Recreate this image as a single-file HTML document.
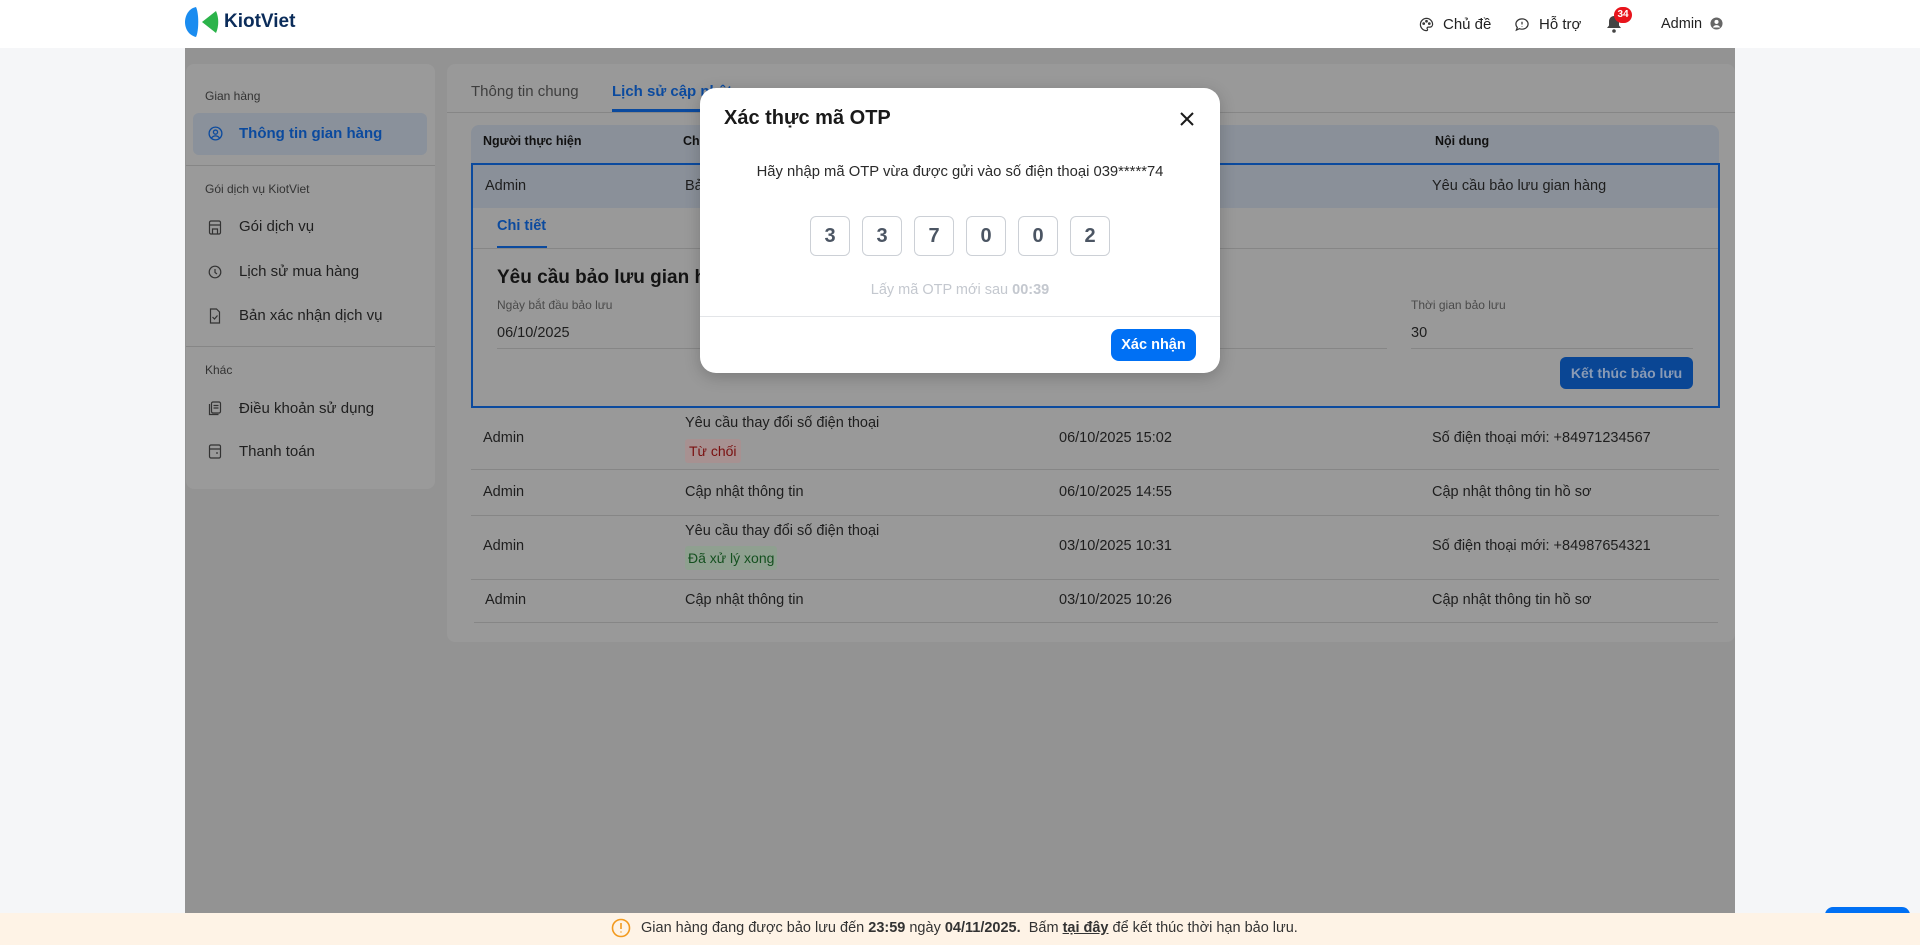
<!DOCTYPE html>
<html><head><meta charset="utf-8"><style>
*{box-sizing:border-box;margin:0;padding:0}
body{width:1920px;height:945px;overflow:hidden;background:#f5f6f8;font-family:"Liberation Sans",sans-serif;color:#222;position:relative;font-size:14px}
.a{position:absolute;white-space:nowrap}
.hdr{left:0;top:0;width:1920px;height:48px;background:#fff}
.cont{left:185px;top:48px;width:1550px;height:865px;background:#939393}
.card{background:#9a9a9a;border-radius:8px}
.lbl{font-size:12px;color:#333}
.it{font-size:15px;color:#1f1f1f}
.th{font-size:12.5px;font-weight:bold;color:#111}
.td{font-size:14.5px;color:#1e1e1e}
.hl{background:#8a9099}
.line{height:1px;background:#868686}
</style></head><body>
<div class="a hdr"></div>
<svg class="a" style="left:184px;top:6px" width="36" height="32" viewBox="0 0 36 32"><path d="M12 1 C3 3 1 12 1 16 C1 22 4 29 12 31 C15 25 15 7 12 1Z" fill="#1a8cf0"/><path d="M32 5 L18 16 L32 27 C35 20 35 12 32 5Z" fill="#2bb34a"/></svg>
<div class="a" style="left:224px;top:11px;font-size:19px;font-weight:bold;color:#0b2c5a">KiotViet</div>
<svg class="a" style="left:1419px;top:17px" width="15" height="15" viewBox="0 0 16 16" fill="none" stroke="#333" stroke-width="1.3"><path d="M8 1.5a6.5 6.5 0 1 0 0 13c1.2 0 1.4-1 .8-1.8-.6-.8 0-1.9 1-1.9h1.7A3 3 0 0 0 14.5 8 6.5 6.5 0 0 0 8 1.5z"/><circle cx="5" cy="7" r=".8"/><circle cx="8" cy="4.5" r=".8"/><circle cx="11" cy="7" r=".8"/></svg>
<div class="a" style="left:1443px;top:16px;font-size:15px;color:#222">Chủ đề</div>
<svg class="a" style="left:1514px;top:17px" width="16" height="15" viewBox="0 0 16 16" fill="none" stroke="#333" stroke-width="1.3"><path d="M8 2c3.6 0 6.5 2.4 6.5 5.5S11.6 13 8 13c-1 0-2-.2-2.8-.5L2 14l1-2.8C2 10.2 1.5 8.9 1.5 7.5 1.5 4.4 4.4 2 8 2z"/><path d="M8 5v3M8 10v.5"/></svg>
<div class="a" style="left:1539px;top:16px;font-size:15px;color:#222">Hỗ trợ</div>
<svg class="a" style="left:1605px;top:14px" width="18" height="20" viewBox="0 0 18 20"><path d="M9 2c3 0 5 2.5 5 5.5v4l2 2.5H2l2-2.5v-4C4 4.5 6 2 9 2z" fill="#444"/><circle cx="9" cy="17" r="1.8" fill="#444"/></svg>
<div class="a" style="left:1614px;top:7px;width:18px;height:16px;border-radius:8px;background:#e8141c;color:#fff;font-size:10px;font-weight:bold;text-align:center;line-height:16px">34</div>
<div class="a" style="left:1661px;top:16px;font-size:14.5px;color:#222">Admin</div>
<svg class="a" style="left:1710px;top:17px" width="13" height="13" viewBox="0 0 14 14"><circle cx="7" cy="7" r="6.5" fill="#666"/><circle cx="7" cy="5.3" r="2.2" fill="#fff"/><path d="M3 11.3c1-1.8 2.4-2.5 4-2.5s3 .7 4 2.5" fill="#fff"/></svg>

<div class="a cont"></div>
<div class="a card" style="left:186px;top:64px;width:249px;height:425px"></div>
<div class="a lbl" style="left:205px;top:89px">Gian hàng</div>
<div class="a" style="left:193px;top:113px;width:234px;height:42px;background:#8a919b;border-radius:6px"></div>
<svg class="a" style="left:208px;top:126px" width="15" height="15" viewBox="0 0 16 16" fill="none" stroke="#0b4a9e" stroke-width="1.4"><circle cx="8" cy="8" r="6.8"/><circle cx="8" cy="6.5" r="2.2"/><path d="M3.8 12.8c1-1.6 2.4-2.3 4.2-2.3s3.2.7 4.2 2.3"/></svg>
<div class="a" style="left:239px;top:125px;font-size:15px;font-weight:bold;color:#0b4a9e">Thông tin gian hàng</div>
<div class="a line" style="left:186px;top:165px;width:249px"></div>
<div class="a lbl" style="left:205px;top:182px">Gói dịch vụ KiotViet</div>
<div class="a it" style="left:239px;top:218px">Gói dịch vụ</div>
<div class="a it" style="left:239px;top:263px">Lịch sử mua hàng</div>
<div class="a it" style="left:239px;top:307px">Bản xác nhận dịch vụ</div>
<svg class="a" style="left:208px;top:220px" width="14" height="110" viewBox="0 0 14 110" fill="none" stroke="#333" stroke-width="1.2"><rect x="1.5" y="1" width="11" height="13" rx="1.5"/><path d="M1.5 5h11M4.5 14V9h5v5"/><circle cx="7" cy="52" r="5.8"/><path d="M7 49v3.5l2 1.5"/><path d="M2.5 89h6l3 3v11h-9z"/><path d="M4.5 97l2 2 3-3.5"/></svg>
<div class="a line" style="left:186px;top:346px;width:249px"></div>
<div class="a lbl" style="left:205px;top:363px">Khác</div>
<div class="a it" style="left:239px;top:400px">Điều khoản sử dụng</div>
<div class="a it" style="left:239px;top:443px">Thanh toán</div>
<svg class="a" style="left:208px;top:401px" width="14" height="60" viewBox="0 0 14 60" fill="none" stroke="#333" stroke-width="1.2"><rect x="3.5" y="1" width="9" height="11" rx="1.5"/><path d="M1.5 3v10.5h9M5.5 4.5h5M5.5 7h5"/><rect x="1.5" y="44" width="11" height="13" rx="1.5"/><path d="M1.5 48h11M9 51v2"/></svg>

<div class="a card" style="left:447px;top:64px;width:1288px;height:578px;background:#999"></div>
<div class="a" style="left:471px;top:83px;font-size:15px;color:#3e3e3e">Thông tin chung</div>
<div class="a" style="left:612px;top:83px;font-size:15px;font-weight:bold;color:#0b4a9e">Lịch sử cập nhật</div>
<div class="a line" style="left:447px;top:112px;width:1288px"></div>
<div class="a" style="left:612px;top:109px;width:90px;height:3px;background:#0b4a9e"></div>
<div class="a hl" style="left:471px;top:125px;width:1248px;height:39px;border-radius:8px 8px 0 0"></div>
<div class="a th" style="left:483px;top:134px">Người thực hiện</div>
<div class="a th" style="left:683px;top:134px">Chức năng</div>
<div class="a th" style="left:1435px;top:134px">Nội dung</div>
<div class="a" style="left:471px;top:163px;width:1249px;height:245px;border:2px solid #0b4a9e"></div>
<div class="a hl" style="left:473px;top:165px;width:1245px;height:43px"></div>
<div class="a td" style="left:485px;top:178px">Admin</div>
<div class="a td" style="left:685px;top:178px">Bảo lưu gian hàng</div>
<div class="a td" style="left:1432px;top:178px">Yêu cầu bảo lưu gian hàng</div>
<div class="a" style="left:497px;top:218px;font-size:14.5px;font-weight:bold;color:#0b4a9e">Chi tiết</div>
<div class="a" style="left:497px;top:246px;width:50px;height:3px;background:#0b4a9e"></div>
<div class="a line" style="left:473px;top:248px;width:1245px"></div>
<div class="a" style="left:497px;top:267px;font-size:19px;font-weight:bold;color:#141414">Yêu cầu bảo lưu gian hàng</div>
<div class="a" style="left:497px;top:298px;font-size:12px;color:#4a4a4a">Ngày bắt đầu bảo lưu</div>
<div class="a td" style="left:497px;top:325px">06/10/2025</div>
<div class="a line" style="left:497px;top:348px;width:890px"></div>
<div class="a" style="left:1411px;top:298px;font-size:12px;color:#4a4a4a">Thời gian bảo lưu</div>
<div class="a td" style="left:1411px;top:325px">30</div>
<div class="a line" style="left:1411px;top:348px;width:282px"></div>
<div class="a" style="left:1560px;top:357px;width:133px;height:32px;background:#0a4694;border-radius:6px;color:#8a9bb5;font-size:14px;font-weight:bold;text-align:center;line-height:32px">Kết thúc bảo lưu</div>

<div class="a td" style="left:483px;top:430px">Admin</div>
<div class="a td" style="left:685px;top:415px">Yêu cầu thay đổi số điện thoại</div>
<div class="a" style="left:685px;top:439px;height:24px;padding:0 4px;background:#a79191;border-radius:3px;color:#7a1010;font-size:14px;line-height:24px">Từ chối</div>
<div class="a td" style="left:1059px;top:430px">06/10/2025 15:02</div>
<div class="a td" style="left:1432px;top:430px">Số điện thoại mới: +84971234567</div>
<div class="a line" style="left:471px;top:469px;width:1248px"></div>
<div class="a td" style="left:483px;top:484px">Admin</div>
<div class="a td" style="left:685px;top:484px">Cập nhật thông tin</div>
<div class="a td" style="left:1059px;top:484px">06/10/2025 14:55</div>
<div class="a td" style="left:1432px;top:484px">Cập nhật thông tin hồ sơ</div>
<div class="a line" style="left:471px;top:515px;width:1248px"></div>
<div class="a td" style="left:483px;top:538px">Admin</div>
<div class="a td" style="left:685px;top:523px">Yêu cầu thay đổi số điện thoại</div>
<div class="a" style="left:685px;top:546px;height:24px;padding:0 3px;background:#8fa090;border-radius:3px;color:#14501f;font-size:14px;line-height:24px">Đã xử lý xong</div>
<div class="a td" style="left:1059px;top:538px">03/10/2025 10:31</div>
<div class="a td" style="left:1432px;top:538px">Số điện thoại mới: +84987654321</div>
<div class="a line" style="left:471px;top:579px;width:1248px"></div>
<div class="a td" style="left:485px;top:592px">Admin</div>
<div class="a td" style="left:685px;top:592px">Cập nhật thông tin</div>
<div class="a td" style="left:1059px;top:592px">03/10/2025 10:26</div>
<div class="a td" style="left:1432px;top:592px">Cập nhật thông tin hồ sơ</div>
<div class="a line" style="left:474px;top:622px;width:1244px"></div>

<div class="a" style="left:700px;top:88px;width:520px;height:285px;background:#fff;border-radius:16px;box-shadow:0 4px 16px rgba(0,0,0,.2)"></div>
<div class="a" style="left:724px;top:107px;font-size:20px;font-weight:bold;color:#1a1a1a">Xác thực mã OTP</div>
<svg class="a" style="left:1180px;top:112px" width="14" height="14" viewBox="0 0 14 14" stroke="#1a1a1a" stroke-width="2"><path d="M1 1L13 13M13 1L1 13"/></svg>
<div class="a" style="left:700px;width:520px;top:164px;text-align:center;font-size:14.8px;color:#2a2a2a">Hãy nhập mã OTP vừa được gửi vào số điện thoại 039*****74</div>
<div class="a" style="left:810px;top:216px;display:flex;gap:12px">
<div style="width:40px;height:40px;border:1px solid #ccd0d6;border-radius:6px;text-align:center;line-height:38px;font-size:20px;font-weight:bold;color:#4b5563">3</div>
<div style="width:40px;height:40px;border:1px solid #ccd0d6;border-radius:6px;text-align:center;line-height:38px;font-size:20px;font-weight:bold;color:#4b5563">3</div>
<div style="width:40px;height:40px;border:1px solid #ccd0d6;border-radius:6px;text-align:center;line-height:38px;font-size:20px;font-weight:bold;color:#4b5563">7</div>
<div style="width:40px;height:40px;border:1px solid #ccd0d6;border-radius:6px;text-align:center;line-height:38px;font-size:20px;font-weight:bold;color:#4b5563">0</div>
<div style="width:40px;height:40px;border:1px solid #ccd0d6;border-radius:6px;text-align:center;line-height:38px;font-size:20px;font-weight:bold;color:#4b5563">0</div>
<div style="width:40px;height:40px;border:1px solid #ccd0d6;border-radius:6px;text-align:center;line-height:38px;font-size:20px;font-weight:bold;color:#4b5563">2</div>
</div>
<div class="a" style="left:700px;width:520px;top:282px;text-align:center;font-size:14.5px;color:#c4c8cf">Lấy mã OTP mới sau <b>00:39</b></div>
<div class="a" style="left:700px;top:316px;width:520px;height:1px;background:#e3e5e8"></div>
<div class="a" style="left:1111px;top:329px;width:85px;height:32px;background:#0070f4;border-radius:8px;color:#fff;font-size:14.5px;font-weight:bold;text-align:center;line-height:32px">Xác nhận</div>

<div class="a" style="left:1825px;top:907px;width:85px;height:20px;background:#0070f4;border-radius:8px"></div>
<div class="a" style="left:0;top:913px;width:1920px;height:32px;background:#fef3e6"></div>
<svg class="a" style="left:611px;top:918px" width="20" height="20" viewBox="0 0 20 20" fill="none" stroke="#f29a1f" stroke-width="1.6"><circle cx="10" cy="10" r="8.5"/><path d="M10 5v6M10 13.5v1"/></svg>
<div class="a" style="left:641px;top:920px;font-size:14.5px;color:#333">Gian hàng đang được bảo lưu đến <b>23:59</b> ngày <b>04/11/2025.</b>&nbsp; Bấm <b><u>tại đây</u></b> để kết thúc thời hạn bảo lưu.</div>
</body></html>
